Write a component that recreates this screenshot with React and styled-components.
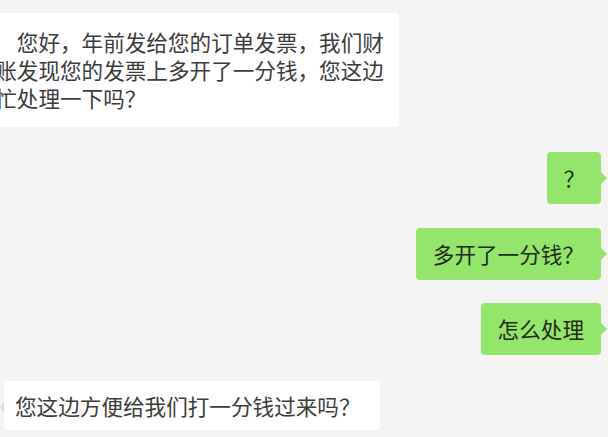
import { createGlobalStyle, styled } from 'styled-components'

const GlobalStyle = createGlobalStyle`
  html, body {
    margin: 0;
    padding: 0;
    background: #f4f4f4;
  }
  body {
    font-family: "Noto Sans CJK SC", "Microsoft YaHei", sans-serif;
  }
`

const ChatArea = styled.div`
  width: 608px;
  height: 437px;
  overflow: hidden;
  background: #f4f4f4;
  display: flex;
  flex-direction: column;
  padding-top: 13px;
  box-sizing: border-box;
`

const Row = styled.div`
  display: flex;
  justify-content: ${props => (props.mine ? 'flex-end' : 'flex-start')};
  padding-right: ${props => (props.mine ? '7px' : '0')};
  margin-bottom: ${props => props.gap || 0}px;
  flex-shrink: 0;
`

const Bubble = styled.div`
  position: relative;
  margin-left: ${props => props.offset || 0}px;
  padding: ${props => props.pad || '12px 17px'};
  border-radius: 4px;
  font-size: 21.6px;
  line-height: 28px;
  color: ${props => (props.mine ? '#1f2c17' : '#3c3c3c')};
  background: ${props => (props.mine ? '#94e56c' : '#ffffff')};
  white-space: nowrap;

  &::after {
    content: '';
    position: absolute;
    top: 20px;
    ${props => (props.mine ? 'right: -6px;' : 'left: -4px;')}
    border-top: 6px solid transparent;
    border-bottom: 6px solid transparent;
    ${props => (props.mine
      ? 'border-left: 6px solid #94e56c;'
      : 'border-right: 4px solid #dcdcdc;')}
  }
`

const Line = styled.span`
  display: block;
`

export default function App() {
  return (
    <>
      <GlobalStyle />
      <ChatArea>
        <Row gap={25}>
          <Bubble offset={-59} pad="15px 15px 15px 11px">
            <Line>老板　您好，年前发给您的订单发票，我们财</Line>
            <Line>务查账发现您的发票上多开了一分钱，您这边</Line>
            <Line>能帮忙处理一下吗？</Line>
          </Bubble>
        </Row>
        <Row mine gap={24}>
          <Bubble mine pad="12px 16px">？</Bubble>
        </Row>
        <Row mine gap={23}>
          <Bubble mine>多开了一分钱？</Bubble>
        </Row>
        <Row mine gap={26}>
          <Bubble mine>怎么处理</Bubble>
        </Row>
        <Row>
          <Bubble offset={4} pad="11px 19px 10px 11px">
            您这边方便给我们打一分钱过来吗？
          </Bubble>
        </Row>
      </ChatArea>
    </>
  )
}
